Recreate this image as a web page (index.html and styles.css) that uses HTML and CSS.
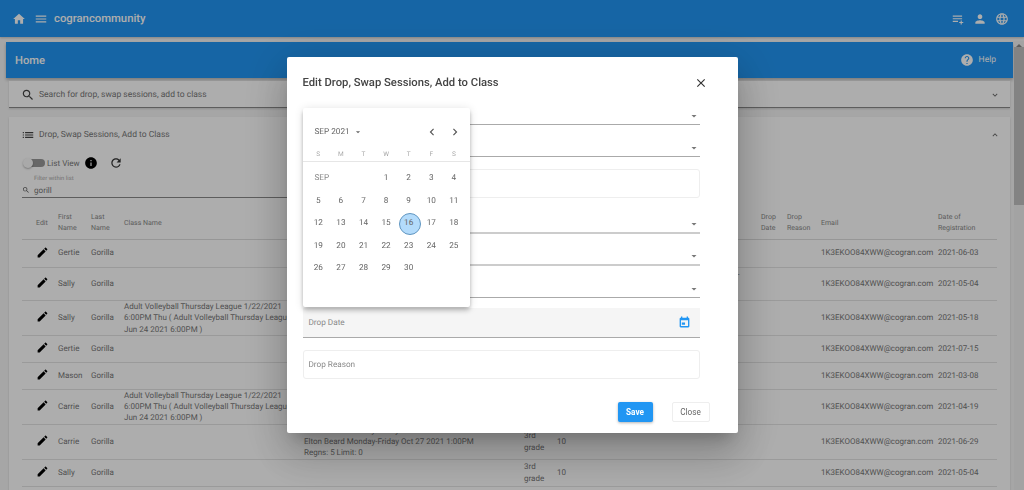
FILE: index.html
```html
<!DOCTYPE html>
<html lang="en">
<head>
<meta charset="utf-8">
<title>Home</title>
<link rel="stylesheet" href="styles.css">
</head>
<body>
<svg class="sprite" aria-hidden="true">
  <symbol id="i-home" viewBox="0 0 24 24"><path d="M10 20v-6h4v6h5v-8h3L12 3 2 12h3v8z"/></symbol>
  <symbol id="i-menu" viewBox="0 0 24 24"><path d="M3 18h18v-2H3v2zm0-5h18v-2H3v2zm0-7v2h18V6H3z"/></symbol>
  <symbol id="i-queue" viewBox="0 0 24 24"><path d="M3 6h16v2H3V6zm0 4.500h16v2H3v-2zm0 4.500h9v2H3v-2zm13.500-.5h2V17h2.500v2h-2.500v2.500h-2V19H14v-2h2.500v-2.500z"/></symbol>
  <symbol id="i-person" viewBox="0 0 24 24"><path d="M12 12c2.21 0 4-1.79 4-4s-1.79-4-4-4-4 1.79-4 4 1.79 4 4 4zm0 2c-2.67 0-8 1.34-8 4v2h16v-2c0-2.66-5.33-4-8-4z"/></symbol>
  <symbol id="i-globe" viewBox="0 0 24 24"><path d="M11.99 2C6.47 2 2 6.48 2 12s4.47 10 9.99 10C17.52 22 22 17.52 22 12S17.52 2 11.99 2zm6.93 6h-2.95c-.32-1.25-.78-2.45-1.38-3.56 1.84.63 3.37 1.91 4.33 3.56zM12 4.04c.83 1.2 1.48 2.53 1.91 3.96h-3.82c.43-1.43 1.08-2.76 1.91-3.96zM4.26 14C4.1 13.36 4 12.69 4 12s.1-1.36.26-2h3.38c-.08.66-.14 1.32-.14 2 0 .68.06 1.34.14 2H4.26zm.82 2h2.95c.32 1.25.78 2.45 1.38 3.56-1.84-.63-3.37-1.9-4.33-3.56zm2.95-8H5.08c.96-1.66 2.49-2.93 4.33-3.56C8.81 5.55 8.35 6.75 8.03 8zM12 19.96c-.83-1.2-1.48-2.53-1.91-3.96h3.82c-.43 1.43-1.08 2.76-1.91 3.96zM14.34 14H9.66c-.09-.66-.16-1.32-.16-2 0-.68.07-1.35.16-2h4.68c.09.65.16 1.32.16 2 0 .68-.07 1.34-.16 2zm.25 5.56c.6-1.11 1.06-2.31 1.38-3.56h2.95c-.96 1.65-2.49 2.93-4.33 3.56zM16.36 14c.08-.66.14-1.32.14-2 0-.68-.06-1.34-.14-2h3.38c.16.64.26 1.31.26 2s-.1 1.36-.26 2h-3.38z"/></symbol>
  <symbol id="i-help" viewBox="0 0 24 24"><path d="M12 2C6.48 2 2 6.48 2 12s4.48 10 10 10 10-4.48 10-10S17.52 2 12 2zm1 17h-2v-2h2v2zm2.07-7.75l-.9.92C13.45 12.9 13 13.5 13 15h-2v-.5c0-1.1.45-2.1 1.17-2.83l1.24-1.26c.37-.36.59-.86.59-1.41 0-1.1-.9-2-2-2s-2 .9-2 2H8c0-2.21 1.79-4 4-4s4 1.79 4 4c0 .88-.36 1.68-.93 2.25z"/></symbol>
  <symbol id="i-search" viewBox="0 0 24 24"><path d="M15.5 14h-.79l-.28-.27C15.41 12.59 16 11.11 16 9.5 16 5.91 13.09 3 9.5 3S3 5.91 3 9.5 5.91 16 9.5 16c1.61 0 3.09-.59 4.23-1.57l.27.28v.79l5 4.99L20.49 19l-4.99-5zm-6 0C7.01 14 5 11.99 5 9.5S7.01 5 9.5 5 14 7.01 14 9.5 11.99 14 9.5 14z"/></symbol>
  <symbol id="i-down" viewBox="0 0 24 24"><path d="M16.59 8.59L12 13.17 7.41 8.59 6 10l6 6 6-6z"/></symbol>
  <symbol id="i-up" viewBox="0 0 24 24"><path d="M12 8l-6 6 1.41 1.41L12 10.83l4.59 4.58L18 14z"/></symbol>
  <symbol id="i-list" viewBox="0 0 24 24"><path d="M3 13h2v-2H3v2zm0 4h2v-2H3v2zm0-8h2V7H3v2zm4 4h14v-2H7v2zm0 4h14v-2H7v2zM7 7v2h14V7H7z"/></symbol>
  <symbol id="i-info" viewBox="0 0 24 24"><path d="M12 2C6.48 2 2 6.48 2 12s4.48 10 10 10 10-4.48 10-10S17.52 2 12 2zm1 15h-2v-6h2v6zm0-8h-2V7h2v2z"/></symbol>
  <symbol id="i-refresh" viewBox="0 0 24 24"><path d="M17.65 6.35C16.2 4.9 14.21 4 12 4c-4.42 0-7.99 3.58-7.99 8s3.57 8 7.99 8c3.73 0 6.84-2.55 7.73-6h-2.08c-.82 2.33-3.04 4-5.65 4-3.31 0-6-2.69-6-6s2.69-6 6-6c1.66 0 3.14.69 4.22 1.78L13 11h7V4l-2.35 2.35z"/></symbol>
  <symbol id="i-edit" viewBox="0 0 24 24"><path d="M3 17.25V21h3.75L17.81 9.94l-3.75-3.75L3 17.25zM20.71 7.04c.39-.39.39-1.02 0-1.41l-2.34-2.34c-.39-.39-1.02-.39-1.41 0l-1.83 1.83 3.75 3.75 1.83-1.83z"/></symbol>
  <symbol id="i-close" viewBox="0 0 24 24"><path d="M19 6.41L17.59 5 12 10.59 6.41 5 5 6.41 10.59 12 5 17.59 6.41 19 12 13.41 17.59 19 19 17.59 13.41 12z"/></symbol>
  <symbol id="i-caret" viewBox="0 0 24 24"><path d="M7 10l5 5 5-5z"/></symbol>
  <symbol id="i-left" viewBox="0 0 24 24"><path d="M15.41 7.41L14 6l-6 6 6 6 1.41-1.41L10.83 12z"/></symbol>
  <symbol id="i-right" viewBox="0 0 24 24"><path d="M10 6L8.59 7.41 13.17 12l-4.58 4.59L10 18l6-6z"/></symbol>
  <symbol id="i-event" viewBox="0 0 24 24"><path d="M13 12H7v4h6v-4zM16 1v2H8V1H5.500v2H5c-1.110 0-2 .9-2 2v14c0 1.100.89 2 2 2h14c1.100 0 2-.9 2-2V5c0-1.100-.9-2-2-2h-.5V1H16zm2.500 17.500h-13V8h13v10.500z"/></symbol>
</svg>

<div class="page">
  <header class="topbar">
    <svg class="icon icon-home"><use href="#i-home"/></svg>
    <svg class="icon icon-menu"><use href="#i-menu"/></svg>
    <span class="brand">cograncommunity</span>
    <span class="topbar-right">
      <svg class="icon"><use href="#i-queue"/></svg>
      <svg class="icon"><use href="#i-person"/></svg>
      <svg class="icon"><use href="#i-globe"/></svg>
    </span>
  </header>

  <div class="body-row">
    <main class="content">
      <div class="home-bar">
        <h1 class="home-title">Home</h1>
        <span class="help">
          <svg class="icon icon-help"><use href="#i-help"/></svg>
          Help
        </span>
      </div>

      <section class="card search-card">
        <svg class="icon icon-dark"><use href="#i-search"/></svg>
        <span class="card-title">Search for drop, swap sessions, add to class</span>
        <svg class="icon icon-chevron"><use href="#i-down"/></svg>
      </section>

      <section class="card list-card">
        <div class="list-head">
          <svg class="icon icon-dark"><use href="#i-list"/></svg>
          <span class="card-title">Drop, Swap Sessions, Add to Class</span>
          <svg class="icon icon-chevron"><use href="#i-up"/></svg>
        </div>

        <div class="tools">
          <span class="toggle"><span class="toggle-thumb"></span></span>
          <span class="tools-label">List View</span>
          <svg class="icon icon-info"><use href="#i-info"/></svg>
          <svg class="icon icon-refresh"><use href="#i-refresh"/></svg>
        </div>

        <div class="filter">
          <span class="filter-label">Filter within list</span>
          <div class="filter-input">
            <svg class="icon icon-mini"><use href="#i-search"/></svg>
            <span>gorill</span>
          </div>
        </div>

        <table class="grid">
          <colgroup>
            <col class="c-edit"><col class="c-name"><col class="c-name"><col class="c-class"><col class="c-session">
            <col class="c-grade"><col class="c-num"><col class="c-note"><col class="c-drop"><col class="c-reason"><col class="c-email"><col class="c-reg">
          </colgroup>
          <thead>
            <tr>
              <th class="cell-edit">Edit</th><th>First Name</th><th>Last Name</th><th>Class Name</th><th></th>
              <th></th><th></th><th></th><th>Drop Date</th><th>Drop Reason</th><th>Email</th><th>Date of Registration</th>
            </tr>
          </thead>
          <tbody>
            <tr class="r28">
              <td class="cell-edit"><svg class="icon icon-edit"><use href="#i-edit"/></svg></td><td>Gertie</td><td>Gorilla</td><td></td><td></td>
              <td></td><td></td><td></td><td></td><td></td><td>1K3EKOO84XWW@cogran.com</td><td>2021-06-03</td>
            </tr>
            <tr class="r33">
              <td class="cell-edit"><svg class="icon icon-edit"><use href="#i-edit"/></svg></td><td>Sally</td><td>Gorilla</td><td></td><td></td>
              <td></td><td></td><td class="note">s-</td><td></td><td></td><td>1K3EKOO84XWW@cogran.com</td><td>2021-05-04</td>
            </tr>
            <tr class="r35">
              <td class="cell-edit"><svg class="icon icon-edit"><use href="#i-edit"/></svg></td><td>Sally</td><td>Gorilla</td><td class="nowrap-ish">Adult Volleyball Thursday League 1/22/2021<br>6:00PM Thu ( Adult Volleyball Thursday League<br>Jun 24 2021 6:00PM )</td><td></td>
              <td></td><td></td><td></td><td></td><td></td><td>1K3EKOO84XWW@cogran.com</td><td>2021-05-18</td>
            </tr>
            <tr class="r27">
              <td class="cell-edit"><svg class="icon icon-edit"><use href="#i-edit"/></svg></td><td>Gertie</td><td>Gorilla</td><td></td><td></td>
              <td></td><td></td><td></td><td></td><td></td><td>1K3EKOO84XWW@cogran.com</td><td>2021-07-15</td>
            </tr>
            <tr class="r27">
              <td class="cell-edit"><svg class="icon icon-edit"><use href="#i-edit"/></svg></td><td>Mason</td><td>Gorilla</td><td></td><td></td>
              <td></td><td></td><td></td><td></td><td></td><td>1K3EKOO84XWW@cogran.com</td><td>2021-03-08</td>
            </tr>
            <tr class="r34">
              <td class="cell-edit"><svg class="icon icon-edit"><use href="#i-edit"/></svg></td><td>Carrie</td><td>Gorilla</td><td class="nowrap-ish">Adult Volleyball Thursday League 1/22/2021<br>6:00PM Thu ( Adult Volleyball Thursday League<br>Jun 24 2021 6:00PM )</td><td></td>
              <td></td><td></td><td></td><td></td><td></td><td>1K3EKOO84XWW@cogran.com</td><td>2021-04-19</td>
            </tr>
            <tr class="r35">
              <td class="cell-edit"><svg class="icon icon-edit"><use href="#i-edit"/></svg></td><td>Carrie</td><td>Gorilla</td><td></td><td class="nowrap-ish">Elton Beard Monday-Friday Oct 27 2021<br>Elton Beard Monday-Friday Oct 27 2021 1:00PM<br>Regns: 5 Limit: 0</td>
              <td class="grade">3rd grade</td><td>10</td><td></td><td></td><td></td><td>1K3EKOO84XWW@cogran.com</td><td>2021-06-29</td>
            </tr>
            <tr class="r27">
              <td class="cell-edit"><svg class="icon icon-edit"><use href="#i-edit"/></svg></td><td>Sally</td><td>Gorilla</td><td></td><td></td>
              <td class="grade">3rd grade</td><td>10</td><td></td><td></td><td></td><td>1K3EKOO84XWW@cogran.com</td><td>2021-05-04</td>
            </tr>
            <tr class="r27">
              <td class="cell-edit"></td><td></td><td></td><td></td><td>Elton Beard</td>
              <td class="grade">3rd grade</td><td></td><td></td><td></td><td></td><td></td><td></td>
            </tr>
          </tbody>
        </table>
      </section>
    </main>

    <aside class="scrollbar" aria-hidden="true">
      <span class="scroll-up"></span>
      <span class="scroll-thumb"></span>
    </aside>
  </div>
</div>

<div class="overlay">
  <div class="modal" role="dialog" aria-modal="true">
    <div class="modal-head">
      <h2 class="modal-title">Edit Drop, Swap Sessions, Add to Class</h2>
      <svg class="icon icon-x"><use href="#i-close"/></svg>
    </div>

    <div class="fields">
      <div class="select"><svg class="icon icon-caret"><use href="#i-caret"/></svg></div>
      <div class="select"><svg class="icon icon-caret"><use href="#i-caret"/></svg></div>
      <div class="box box-first"></div>
      <div class="select select-soft select-gap"><svg class="icon icon-caret"><use href="#i-caret"/></svg></div>
      <div class="select select-soft"><svg class="icon icon-caret"><use href="#i-caret"/></svg></div>
      <div class="select"><svg class="icon icon-caret"><use href="#i-caret"/></svg></div>
      <div class="filled">
        <span>Drop Date</span>
        <svg class="icon icon-event"><use href="#i-event"/></svg>
      </div>
      <div class="box box-reason">Drop Reason</div>
    </div>

    <div class="actions">
      <button class="btn btn-save" type="button">Save</button>
      <button class="btn btn-close" type="button">Close</button>
    </div>

    <div class="picker">
      <div class="picker-head">
        <span class="picker-month">SEP 2021</span>
        <svg class="icon icon-month"><use href="#i-caret"/></svg>
        <svg class="icon icon-nav nav-left"><use href="#i-left"/></svg>
        <svg class="icon icon-nav nav-right"><use href="#i-right"/></svg>
      </div>
      <div class="weekdays">
        <span>S</span><span>M</span><span>T</span><span>W</span><span>T</span><span>F</span><span>S</span>
      </div>
      <div class="days">
        <span class="month-cell">SEP</span>
        <span>1</span><span>2</span><span>3</span><span>4</span>
        <span>5</span><span>6</span><span>7</span><span>8</span><span>9</span><span>10</span><span>11</span>
        <span>12</span><span>13</span><span>14</span><span>15</span><span class="today">16</span><span>17</span><span>18</span>
        <span>19</span><span>20</span><span>21</span><span>22</span><span>23</span><span>24</span><span>25</span>
        <span>26</span><span>27</span><span>28</span><span>29</span><span>30</span>
      </div>
    </div>
  </div>
</div>
</body>
</html>
```

FILE: styles.css
```css
* { box-sizing: border-box; }

html, body {
  margin: 0;
  height: 100%;
  overflow: hidden;
}

body {
  font-family: Roboto, "Liberation Sans", sans-serif;
  text-rendering: geometricPrecision;
  background: #f5f5f5;
  color: #777;
}

.sprite { display: none; }

.icon {
  display: block;
  flex: none;
  width: 14px;
  height: 14px;
  fill: currentColor;
}

.page {
  display: flex;
  flex-direction: column;
  height: 100vh;
  overflow: hidden;
}

/* top bar */
.topbar {
  display: flex;
  align-items: center;
  flex: none;
  height: 37px;
  padding: 0 15px 0 12px;
  background: #2196f3;
  color: #fff;
  box-shadow: 0 1px 2px rgba(0,0,0,.2);
}

.icon-home { margin-right: 8px; }
.icon-menu { margin-right: 6px; }

.brand {
  font-size: 11.3px;
  font-weight: 500;
}

.topbar-right {
  display: flex;
  align-items: center;
  gap: 8px;
  margin-left: auto;
}

/* body */
.body-row {
  display: flex;
  flex: 1;
  min-height: 0;
}

.content {
  flex: 1;
  min-width: 0;
  padding: 5px 1px 0 6px;
  overflow: hidden;
}

.home-bar {
  display: flex;
  align-items: center;
  height: 36px;
  padding: 0 17px 0 9px;
  background: #2196f3;
  color: #fff;
  box-shadow: 0 2px 3px rgba(0,0,0,.25);
}

.home-title {
  margin: 0;
  font-size: 11.2px;
  font-weight: 500;
}

.help {
  display: flex;
  align-items: center;
  gap: 5px;
  margin-left: auto;
  font-size: 8.5px;
}

.card {
  margin: 0 3px;
  background: #fff;
  box-shadow: 0 1px 2px rgba(0,0,0,.15);
}

.search-card {
  display: flex;
  align-items: center;
  height: 27px;
  margin-top: 3px;
  padding: 1px 10px 0 12px;
  border-bottom: 1px solid #8a8a8a;
}

.card-title {
  margin-left: 4px;
  font-size: 8.5px;
  color: #777;
}

.icon-dark { color: #444; }

.icon-chevron {
  width: 10px;
  height: 10px;
  margin-left: auto;
  color: #666;
}

.list-card {
  margin-top: 9px;
  height: 400px;
  padding: 0 13px;
}

.list-head {
  display: flex;
  align-items: center;
  height: 34px;
  padding-top: 1px;
  margin: 0 -3px 0 -1px;
}

.tools {
  display: flex;
  align-items: center;
  height: 14px;
  margin-top: 5px;
  margin-left: 1px;
}

.toggle {
  position: relative;
  display: block;
  width: 22px;
  height: 8px;
  padding-left: 8px;
}

.toggle::before {
  content: "";
  display: block;
  width: 14px;
  height: 8px;
  border-radius: 0 4px 4px 0;
  background: #999;
}

.toggle-thumb {
  position: absolute;
  left: 0;
  top: -1px;
  width: 10px;
  height: 10px;
  border-radius: 50%;
  background: #fafafa;
  box-shadow: 0 1px 2px rgba(0,0,0,.3);
}

.tools-label {
  margin-left: 2px;
  font-size: 8.1px;
}

.icon-info {
  margin-left: 4px;
  color: #000;
}

.icon-refresh {
  margin-left: 11px;
  color: #333;
}

.filter {
  width: 520px;
  margin-top: 5px;
  border-bottom: 1px solid #8a8a8a;
}

.filter-label {
  display: block;
  height: 8px;
  padding-left: 12px;
  font-size: 5.9px;
  line-height: 8px;
  color: #aaa;
}

.filter-input {
  display: flex;
  align-items: center;
  height: 14px;
  font-size: 8.1px;
}

.icon-mini {
  width: 8px;
  height: 8px;
  margin: 0 4px 0 0;
  color: #555;
}

/* table */
.grid {
  width: 975px;
  margin-top: 12px;
  border-collapse: collapse;
  table-layout: fixed;
  line-height: 11.3px;
}

.c-edit { width: 36px; }
.c-name { width: 33px; }
.c-class { width: 180px; }
.c-session { width: 220px; }
.c-grade { width: 33px; }
.c-num { width: 143px; }
.c-note { width: 61px; }
.c-drop { width: 26px; }
.c-reason { width: 34px; }
.c-email { width: 117px; }
.c-reg { width: 59px; }

.grid th {
  height: 29px;
  padding: 0 2px 2px 0;
  font-size: 7px;
  font-weight: 400;
  text-align: left;
  color: #888;
  border-bottom: 1px solid #ddd;
}

.grid td {
  padding: 0;
  font-size: 8px;
  color: #777;
  border-bottom: 1px solid #e4e4e4;
  vertical-align: middle;
}

.grid .cell-edit { padding-left: 14px; }

.grid td.grade { padding-right: 12px; }

.r27 { height: 27px; }
.r28 { height: 28px; }
.r33 { height: 33.5px; }
.r34 { height: 34px; }
.r35 { height: 34.5px; }

.nowrap-ish { white-space: nowrap; }

.grid td.note {
  padding: 1px 0 0 33px;
  vertical-align: top;
}

.icon-edit {
  width: 13px;
  height: 13px;
  margin-top: -2px;
  color: #000;
}

/* scrollbar */
.scrollbar {
  display: flex;
  flex-direction: column;
  flex: none;
  width: 10px;
  margin-top: 4px;
  background: #f1f1f1;
}

.scroll-up {
  display: block;
  height: 5px;
  margin: 1px auto 0;
  width: 0;
  border-left: 3px solid transparent;
  border-right: 3px solid transparent;
  border-bottom: 3px solid #888;
}

.scroll-thumb {
  display: block;
  height: 158px;
  background: #c1c1c1;
}

/* modal */
.overlay {
  position: fixed;
  inset: 0;
  display: flex;
  justify-content: center;
  align-items: flex-start;
  padding-top: 57px;
  background: rgba(0,0,0,.32);
}

.modal {
  position: relative;
  width: 451px;
  height: 376px;
  padding: 16px 28px 12px 16px;
  background: #fff;
  border-radius: 2px;
  box-shadow: 0 11px 15px -7px rgba(0,0,0,.2), 0 24px 38px 3px rgba(0,0,0,.14), 0 9px 46px 8px rgba(0,0,0,.12);
}

.modal-head {
  display: flex;
  align-items: flex-start;
  justify-content: space-between;
  height: 20px;
}

.modal-title {
  margin: 0;
  font-size: 11.25px;
  font-weight: 500;
  line-height: 20px;
  color: #444;
}

.icon-x {
  margin: 3px 2px 0 0;
  color: #333;
}

.fields {
  display: flex;
  flex-direction: column;
  width: 397px;
}

.select {
  display: flex;
  align-items: flex-end;
  justify-content: flex-end;
  height: 32px;
  padding-bottom: 2px;
  border-bottom: 1px solid #aaa;
}

.select-soft {
  border-bottom: 2px solid #ccc;
}

.select-gap { margin-top: 4px; }

.icon-caret {
  width: 12px;
  height: 12px;
  color: #777;
}

.box {
  height: 29px;
  border: 1px solid #eee;
  border-radius: 3px;
}

.box-first { margin-top: 12px; }

.box-reason {
  margin-top: 12px;
  padding-left: 5px;
  font-size: 8.2px;
  line-height: 28px;
  color: #888;
}

.filled {
  display: flex;
  align-items: center;
  justify-content: space-between;
  height: 30px;
  margin-top: 10px;
  padding: 0 9px 0 6px;
  font-size: 8.2px;
  color: #888;
  background: #f5f5f5;
  border-bottom: 1px solid #aaa;
}

.icon-event {
  width: 13px;
  height: 13px;
  color: #2196f3;
}

.actions {
  display: flex;
  justify-content: flex-end;
  gap: 19px;
  margin-top: 23px;
}

.btn {
  height: 20px;
  padding: 0;
  font-family: inherit;
  font-size: 8.2px;
  border-radius: 2px;
}

.btn-save {
  width: 35px;
  font-weight: 700;
  color: #fff;
  background: #2196f3;
  border: 0;
  box-shadow: 0 1px 3px rgba(0,0,0,.3);
}

.btn-close {
  width: 38px;
  color: #666;
  background: #fff;
  border: 1px solid #eee;
}

/* date picker */
.picker {
  position: absolute;
  left: 16px;
  top: 51px;
  width: 167px;
  height: 199px;
  padding-top: 13px;
  background: #fff;
  border-radius: 2px;
  box-shadow: 0 2px 4px -1px rgba(0,0,0,.2), 0 4px 5px rgba(0,0,0,.14), 0 1px 10px rgba(0,0,0,.12);
}

.picker-head {
  display: flex;
  align-items: center;
  height: 22px;
  padding-left: 12px;
  color: #666;
}

.picker-month {
  font-size: 8.2px;
}

.icon-month {
  width: 10px;
  height: 10px;
  margin-left: 3px;
}

.icon-nav {
  color: #555;
}

.nav-left { margin-left: auto; margin-right: 8.5px; }
.nav-right { margin-right: 8px; }

.weekdays,
.days {
  display: grid;
  grid-template-columns: repeat(7, 22.6px);
  padding-left: 4.5px;
  text-align: center;
}

.weekdays {
  align-items: center;
  height: 16px;
  margin-top: 3px;
  font-size: 6.5px;
  color: #aaa;
  border-bottom: 1px solid #e6e6e6;
}

.days {
  grid-auto-rows: 22.5px;
  padding-top: 5px;
  font-size: 8.2px;
  color: #666;
}

.days span {
  display: flex;
  align-items: center;
  justify-content: center;
}

.days .month-cell {
  grid-column: span 3;
  justify-content: flex-start;
  padding-left: 7.5px;
  color: #888;
}

.days .today {
  position: relative;
  z-index: 0;
}

.days .today::before {
  content: "";
  position: absolute;
  left: 1.3px;
  top: 1.25px;
  z-index: -1;
  width: 20px;
  height: 20px;
  border: 1px solid #5f95c0;
  border-radius: 50%;
  background: #b3dbfb;
}
```
